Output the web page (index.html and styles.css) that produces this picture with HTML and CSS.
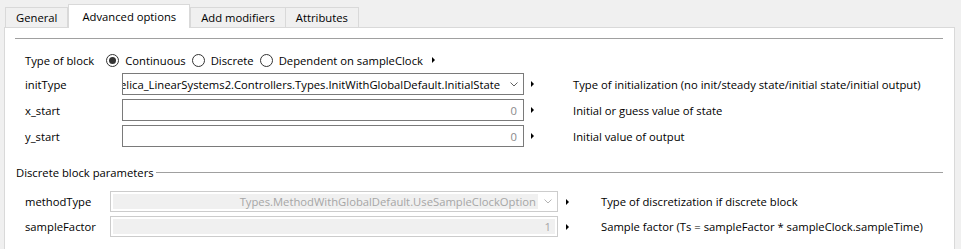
FILE: index.html
```html
<!DOCTYPE html>
<html lang="en">
<head>
  <meta charset="UTF-8" />
  <title>Block parameters</title>
  <link rel="stylesheet" href="styles.css">
</head>
<body>
  <div class="tabs">
    <div class="tab">General</div>
    <div class="tab selected">Advanced options</div>
    <div class="tab">Add modifiers</div>
    <div class="tab">Attributes</div>
  </div>

  <div class="panel">
    <div class="rule"></div>

    <div class="block-type">
      <span class="block-label">Type of block</span>
      <label class="radio"><span class="radio-dot checked"></span>Continuous</label>
      <label class="radio"><span class="radio-dot"></span>Discrete</label>
      <label class="radio"><span class="radio-dot"></span>Dependent on sampleClock</label>
      <span class="more"></span>
    </div>

    <div class="params upper">
      <span class="param-label">initType</span>
      <div class="combo">
        <div class="combo-text"><span>Modelica_LinearSystems2.Controllers.Types.InitWithGlobalDefault.InitialState</span></div>
        <div class="combo-arrow">
          <svg width="8" height="5" viewBox="0 0 8 5"><polyline points="0.5,0.5 4,4 7.5,0.5" fill="none" stroke="#606060" stroke-width="1" /></svg>
        </div>
      </div>
      <span class="more"></span>
      <span class="param-desc">Type of initialization (no init/steady state/initial state/initial output)</span>

      <span class="param-label">x_start</span>
      <div class="field">0</div>
      <span class="more"></span>
      <span class="param-desc">Initial or guess value of state</span>

      <span class="param-label">y_start</span>
      <div class="field">0</div>
      <span class="more"></span>
      <span class="param-desc">Initial value of output</span>
    </div>

    <div class="group-title"><span>Discrete block parameters</span></div>

    <div class="params lower">
      <span class="param-label">methodType</span>
      <div class="combo disabled">
        <div class="combo-text"><span>Types.MethodWithGlobalDefault.UseSampleClockOption</span></div>
        <div class="combo-arrow">
          <svg width="8" height="5" viewBox="0 0 8 5"><polyline points="0.5,0.5 4,4 7.5,0.5" fill="none" stroke="#b4b4b4" stroke-width="1" /></svg>
        </div>
      </div>
      <span class="more"></span>
      <span class="param-desc">Type of discretization if discrete block</span>

      <span class="param-label">sampleFactor</span>
      <div class="field disabled">1</div>
      <span class="more"></span>
      <span class="param-desc">Sample factor (Ts = sampleFactor * sampleClock.sampleTime)</span>
    </div>
  </div>
</body>
</html>
```

FILE: styles.css
```css
body {
  margin: 0;
  height: 249px;
  overflow: hidden;
  background-color: #f0f0f0;
  font-family: "Open Sans", "Noto Sans", sans-serif;
  font-size: 11.25px;
  color: #000;
}
.tabs {
  display: flex;
  align-items: flex-end;
  height: 27px;
  padding-left: 5px;
}
.tab {
  height: 20px;
  padding: 0 10px;
  display: flex;
  align-items: center;
  box-sizing: border-box;
  border: 1px solid #d9d9d9;
  border-bottom: none;
  background-color: #f0f0f0;
}
.tab + .tab {
  margin-left: -1px;
}
.tab.selected {
  position: relative;
  z-index: 1;
  height: 24px;
  margin-bottom: -1px;
  margin-left: 0;
  padding: 0 13px 1px;
  background-color: #fff;
}
.tab.selected + .tab {
  margin-left: 0;
}
.panel {
  width: 951px;
  height: 230px;
  margin-left: 4px;
  box-sizing: border-box;
  border: 1px solid #d9d9d9;
  background-color: #fff;
}
.rule {
  height: 1px;
  margin: 10px 11px 0 10px;
  background-color: #a0a0a0;
}
.block-type {
  display: flex;
  align-items: center;
  height: 16px;
  margin-top: 13px;
  padding-left: 20px;
}
.block-label {
  margin-right: 12px;
}
.radio {
  display: flex;
  align-items: center;
  gap: 6px;
  margin-right: 6px;
}
.radio-dot {
  width: 13px;
  height: 13px;
  box-sizing: border-box;
  border: 1px solid #333;
  border-radius: 50%;
  display: flex;
  align-items: center;
  justify-content: center;
}
.radio-dot.checked::before {
  content: "";
  width: 7px;
  height: 7px;
  border-radius: 50%;
  background-color: #333;
}
.more {
  display: flex;
  align-items: center;
}
.more::before {
  content: "";
  border-left: 3px solid #000;
  border-top: 3px solid transparent;
  border-bottom: 3px solid transparent;
}
.block-type .more {
  margin-left: 3px;
}
.params {
  display: grid;
  padding-left: 20px;
  row-gap: 4px;
  align-items: center;
}
.params.upper {
  margin-top: 5px;
  grid-template-columns: 97px 402px 49px 1fr;
  grid-auto-rows: 22px;
}
.params.upper .more {
  padding-left: 7px;
}
.params.lower {
  margin-top: 11px;
  grid-template-columns: 85px 448px 43px 1fr;
  grid-auto-rows: 21px;
}
.params.lower .more {
  padding-left: 8px;
}
.combo, .field {
  height: 100%;
  box-sizing: border-box;
  border: 1px solid #7a7a7a;
  background-color: #fff;
}
.combo {
  display: flex;
}
.combo-text {
  flex: 1;
  display: flex;
  justify-content: flex-end;
  align-items: center;
  overflow: hidden;
  white-space: nowrap;
  padding-right: 4px;
}
.combo-arrow {
  width: 19px;
  display: flex;
  align-items: center;
  justify-content: center;
}
.field {
  display: flex;
  align-items: center;
  justify-content: flex-end;
  padding-right: 6px;
  color: #8a8a8a;
}
.combo.disabled, .field.disabled {
  border-color: #cccccc;
  color: #a6a6a6;
}
.combo.disabled .combo-text {
  margin: 2px 0 2px 2px;
  padding-right: 2px;
  background-color: #f0f0f0;
}
.field.disabled {
  padding-right: 6px;
  background-color: #f0f0f0;
  box-shadow: inset 0 0 0 2px #fff;
}
.group-title {
  display: flex;
  align-items: center;
  height: 16px;
  margin: 17px 11px 0 11px;
}
.group-title::after {
  content: "";
  flex: 1;
  height: 1px;
  margin-left: 2px;
  background-color: #a0a0a0;
}
```
